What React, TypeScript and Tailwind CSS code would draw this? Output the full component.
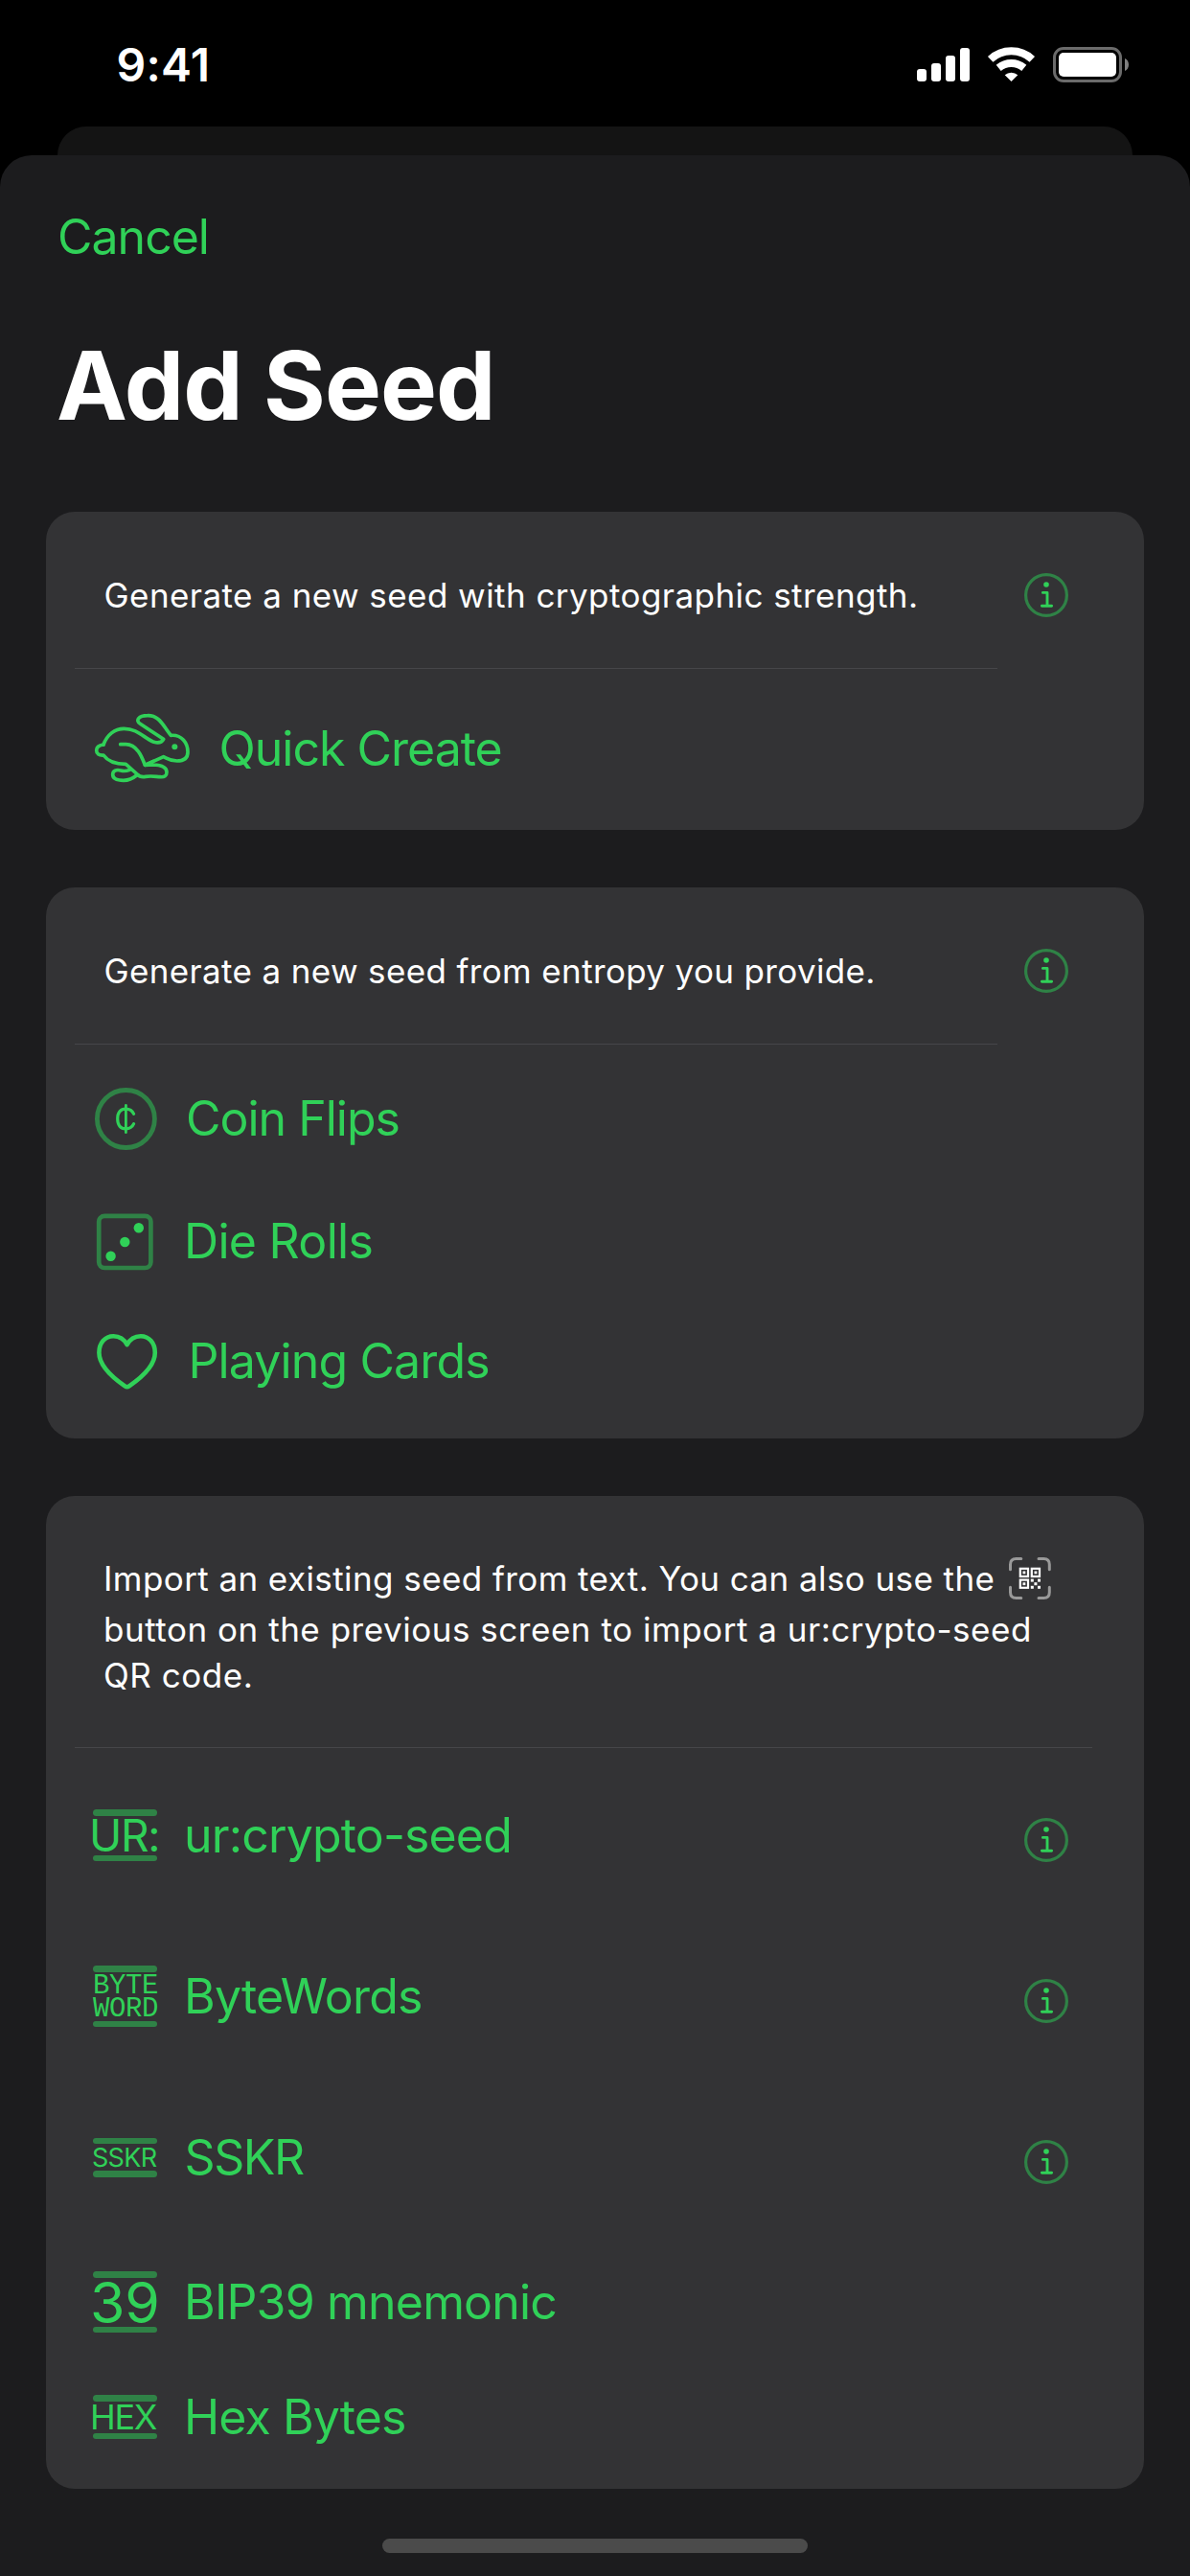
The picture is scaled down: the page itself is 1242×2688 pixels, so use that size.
import React from 'react';

const INTER = "font-['Inter','Liberation_Sans',sans-serif]";

function StatusBar() {
  return (
    <div className="flex h-[132px] items-start justify-between pl-[121.5px] pr-[64px]">
      <div className="mt-[36px] h-[64px] text-[48px] leading-[64px] font-semibold tracking-[0.3px] text-white">9:41</div>
      <svg className="mt-[49px]" width="222" height="37" viewBox="956 49 222 37" fill="none">
        <g fill="#fff">
          <rect x="957" y="72" width="10" height="13" rx="3" />
          <rect x="972" y="66" width="10" height="19" rx="3" />
          <rect x="987" y="58" width="10" height="27" rx="3" />
          <rect x="1002" y="50" width="10" height="35" rx="3" />
          <path d="M1048.7 78.3 A10.5 10.5 0 0 1 1062.3 78.3 L1056 84.6 Q1055.5 85.2 1055 84.6 Z" />
          <rect x="1105" y="55" width="60" height="25" rx="5" />
        </g>
        <g stroke="#fff" strokeWidth="8">
          <path d="M1033.7 61.8 A31.9 31.9 0 0 1 1077.3 61.8" />
          <path d="M1042.2 70.8 A21.2 21.2 0 0 1 1068.8 70.8" />
        </g>
        <rect x="1100.5" y="50.5" width="69" height="34" rx="9.5" stroke="#6b6b6b" strokeWidth="3" />
        <path d="M1174 61 C1176.6 62 1178 64.8 1178 67.5 C1178 70.2 1176.6 73 1174 74 Z" fill="#808080" />
      </svg>
    </div>
  );
}

function InfoIcon() {
  return (
    <svg className="shrink-0" width="46" height="46" viewBox="-23 -23 46 46" fill="none" strokeLinecap="round" strokeLinejoin="round">
      <circle r="21.4" stroke="#2f8246" strokeWidth="3.2" />
      <circle cx="0" cy="-11" r="2.8" fill="#30d158" />
      <path d="M-3.6 -2.6 H1 V11.3 M-4.6 11.3 H5.6" stroke="#30d158" strokeWidth="2.9" />
    </svg>
  );
}

function RabbitIcon() {
  return (
    <svg className="shrink-0" width="103" height="76" viewBox="51 66 309 228" fill="none" stroke="#30d158" strokeWidth="11" strokeLinejoin="round" strokeLinecap="round">
      <path d="M84 168 C95 138 119 118 148 118 C190 118 212 148 242 160 C256 164 266 162 272 151 L199 103 C183 92 194 77 222 77 C259 76 270 108 295 139 C330 136 348 164 348 191 C348 213 334 219 314 219 C291 219 283 211 272 206 L214 232 C205 209 190 167 154 167 L137 167" />
      <path d="M84 168 C69 170 62 177 62 186 C62 197 70 202 84 201 C98 221 119 229 154 229 L190 261 C197 269 205 270 216 268 C234 265 246 268 262 269 C275 270 282 266 282 254 C282 239 268 232 240 231 L214 232 L240 220" />
      <path d="M166 247 C156 251 148 252 138 249 C124 245 113 250 113 262 C113 274 126 280 147 280 C162 280 177 273 188 264" />
      <circle cx="307" cy="175" r="9" fill="#30d158" stroke="none" />
    </svg>
  );
}

function CoinIcon() {
  return (
    <svg className="shrink-0" width="67" height="70" viewBox="97 -35.5 67 70" fill="none" strokeLinecap="round">
      <circle cx="131.4" cy="0" r="30" stroke="#2f8246" strokeWidth="4.8" />
      <path d="M139.6 -5.2 C138 -8.8 134.8 -10.4 131.2 -10.4 C125.8 -10.4 122.7 -6.6 122.7 0 C122.7 6.6 125.8 10.4 131.2 10.4 C134.8 10.4 138 8.8 139.6 5.2" stroke="#30d158" strokeWidth="3.2" />
      <path d="M131.4 -14.2 V14.2" stroke="#30d158" strokeWidth="2.8" />
    </svg>
  );
}

function DieIcon() {
  return (
    <svg className="shrink-0" width="67" height="70" viewBox="97 -36 67 70" fill="none">
      <rect x="103.2" y="-27.2" width="54.2" height="54.2" rx="6" stroke="#2f8246" strokeWidth="4.7" />
      <g fill="#30d158">
        <circle cx="144.8" cy="-14.8" r="5.2" />
        <circle cx="130.3" cy="0" r="5.2" />
        <circle cx="115.6" cy="14.7" r="5.2" />
      </g>
    </svg>
  );
}

function HeartIcon() {
  return (
    <svg className="shrink-0" width="68" height="70" viewBox="97 -35 68 70" fill="none">
      <path d="M132.6 27.3 C131.8 27.3 131 26.8 130 26.1 C114 15 103.4 2.5 103.4 -8.5 C103.4 -18.6 109.6 -25.7 118.4 -25.7 C124.6 -25.7 129.6 -22.4 132.6 -16.8 C135.6 -22.4 140.6 -25.7 146.8 -25.7 C155.6 -25.7 161.8 -18.6 161.8 -8.5 C161.8 2.5 151.2 15 135.2 26.1 C134.2 26.8 133.4 27.3 132.6 27.3 Z" stroke="#30d158" strokeWidth="4.6" strokeLinejoin="round" />
    </svg>
  );
}

function ScanIcon() {
  return (
    <svg className="ml-[15px] shrink-0" width="44" height="44" viewBox="0 0 44 44" fill="none">
      <path d="M1.5 12.8 V7.5 C1.5 3.5 3.5 1.5 7.5 1.5 H12.8 M31 1.5 H36.3 C40.3 1.5 42.3 3.5 42.3 7.5 V12.8 M42.3 31.2 V36.5 C42.3 40.5 40.3 42.5 36.3 42.5 H31 M12.8 42.5 H7.5 C3.5 42.5 1.5 40.5 1.5 36.5 V31.2" stroke="#999999" strokeWidth="3" strokeLinecap="round" />
      <g stroke="#fff" strokeWidth="2.2">
        <rect x="11.8" y="11.8" width="8.2" height="8.2" />
        <rect x="23.8" y="11.8" width="8.2" height="8.2" />
        <rect x="11.8" y="23.6" width="8.2" height="8.2" />
      </g>
      <g fill="#fff">
        <rect x="14.5" y="14.5" width="2.8" height="2.8" />
        <rect x="26.5" y="14.5" width="2.8" height="2.8" />
        <rect x="14.5" y="26.3" width="2.8" height="2.8" />
        <rect x="22.8" y="22.6" width="3" height="3" />
        <rect x="30" y="22.6" width="3" height="3" />
        <rect x="26.4" y="26.2" width="3" height="3" />
        <rect x="22.8" y="29.8" width="3" height="3" />
        <rect x="30" y="29.8" width="3" height="3" />
      </g>
    </svg>
  );
}

function TextIcon({ className, children }: { className: string; children: React.ReactNode }) {
  return (
    <div className="flex w-[67px] shrink-0 flex-col">
      <div className="h-[6.5px] rounded-full bg-[#2f8246]" />
      <div className={`flex flex-col whitespace-nowrap text-[#30d158] ${className}`}>{children}</div>
      <div className="h-[6.5px] rounded-full bg-[#2f8246]" />
    </div>
  );
}

function Option({ icon, label, className, labelClass, info }: { icon: React.ReactNode; label: string; className: string; labelClass: string; info?: boolean }) {
  return (
    <div className={`flex items-center pr-[79px] pl-[49px] ${className}`}>
      {icon}
      <div className={`grow text-[50px] leading-[60px] whitespace-nowrap text-[#30d158] ${labelClass}`}>{label}</div>
      {info && (
        <div className="pt-[10px]">
          <InfoIcon />
        </div>
      )}
    </div>
  );
}

function Intro({ text, className }: { text: string; className: string }) {
  return (
    <>
      <div className="flex h-[163px] items-center justify-between pt-[11px] pr-[79px] pl-[60.5px]">
        <div className={`text-[35px] leading-[48px] whitespace-nowrap text-white ${className}`}>{text}</div>
        <InfoIcon />
      </div>
      <div className="ml-[30px] h-px w-[963px] bg-[#464649]" />
    </>
  );
}

export default function App() {
  return (
    <div className={`flex h-[2688px] w-[1242px] flex-col overflow-hidden bg-black ${INTER}`}>
      <StatusBar />
      <div className="mx-[60px] h-[30px] rounded-t-[30px] bg-[#141414]" />
      <div className="flex grow flex-col rounded-t-[33px] bg-[#1c1c1e] px-[48px]">
        <div className="mt-[52px] ml-[12px] h-[66px] text-[50px] leading-[66px] tracking-[-1px] text-[#30d158]">Cancel</div>
        <h1 className="mt-[62px] ml-[11px] h-[120px] text-[99px] leading-[120px] font-bold tracking-[-0.95px] text-white">Add Seed</h1>

        <section className="mt-[72px] h-[332px] rounded-[30px] bg-[#333335]">
          <Intro text="Generate a new seed with cryptographic strength." className="tracking-[0.44px]" />
          <Option icon={<RabbitIcon />} label="Quick Create" className="h-[166px]" labelClass="ml-[28.5px] tracking-[-1px]" />
        </section>

        <section className="mt-[60px] h-[575px] rounded-[30px] bg-[#333335]">
          <Intro text="Generate a new seed from entropy you provide." className="tracking-[0.36px]" />
          <Option icon={<CoinIcon />} label="Coin Flips" className="h-[154px]" labelClass="ml-[30px] tracking-[-1px]" />
          <Option icon={<DieIcon />} label="Die Rolls" className="h-[102px]" labelClass="ml-[28px] tracking-[-0.7px]" />
          <Option icon={<HeartIcon />} label="Playing Cards" className="h-[148px]" labelClass="ml-[31.5px] tracking-[-0.87px]" />
        </section>

        <section className="mt-[60px] h-[1036px] rounded-[30px] bg-[#333335]">
          <div className="h-[262px] pt-[56px] pl-[60px] text-[35px] whitespace-nowrap text-white">
            <div className="flex h-[60px] items-center">
              <span className="leading-[60px] tracking-[0.42px]">Import an existing seed from text. You can also use the</span>
              <ScanIcon />
            </div>
            <div className="h-[46px] leading-[46px] tracking-[0.53px]">button on the previous screen to import a ur:crypto-seed</div>
            <div className="h-[50px] leading-[50px] tracking-[0.55px]">QR code.</div>
          </div>
          <div className="ml-[30px] h-px w-[1062px] bg-[#464649]" />
          <Option
            icon={<TextIcon className="-ml-[4px] h-[41px] text-[46px] leading-[41px] tracking-[-1.3px]">UR:</TextIcon>}
            label="ur:crypto-seed"
            className="h-[182px]"
            labelClass="ml-[28px] tracking-[-0.85px]"
            info
          />
          <Option
            icon={
              <TextIcon className="h-[51px] pt-[3px] font-['Liberation_Mono',monospace] text-[29px] leading-[24.5px] tracking-[-0.4px]">
                <span>BYTE</span>
                <span>WORD</span>
              </TextIcon>
            }
            label="ByteWords"
            className="h-[154px]"
            labelClass="ml-[28px] tracking-[-0.8px]"
            info
          />
          <Option
            icon={<TextIcon className="-ml-[1px] h-[28px] text-[27px] leading-[29px] tracking-[-0.7px]">SSKR</TextIcon>}
            label="SSKR"
            className="h-[182px]"
            labelClass="ml-[28.5px] tracking-[-1.4px]"
            info
          />
          <Option
            icon={<TextIcon className="-ml-[3px] h-[51px] text-[59px] leading-[51px] tracking-[-0.3px]">39</TextIcon>}
            label="BIP39 mnemonic"
            className="h-[120px]"
            labelClass="ml-[28px] tracking-[-0.82px]"
          />
          <Option
            icon={<TextIcon className="-ml-[3px] h-[33px] text-[36px] leading-[33px] tracking-[-1.3px]">HEX</TextIcon>}
            label="Hex Bytes"
            className="h-[120px]"
            labelClass="ml-[28px] tracking-[-0.9px]"
          />
        </section>

        <div className="mt-[52px] h-[15px] w-[444px] self-center rounded-full bg-[#4b4b4b]" />
      </div>
    </div>
  );
}
